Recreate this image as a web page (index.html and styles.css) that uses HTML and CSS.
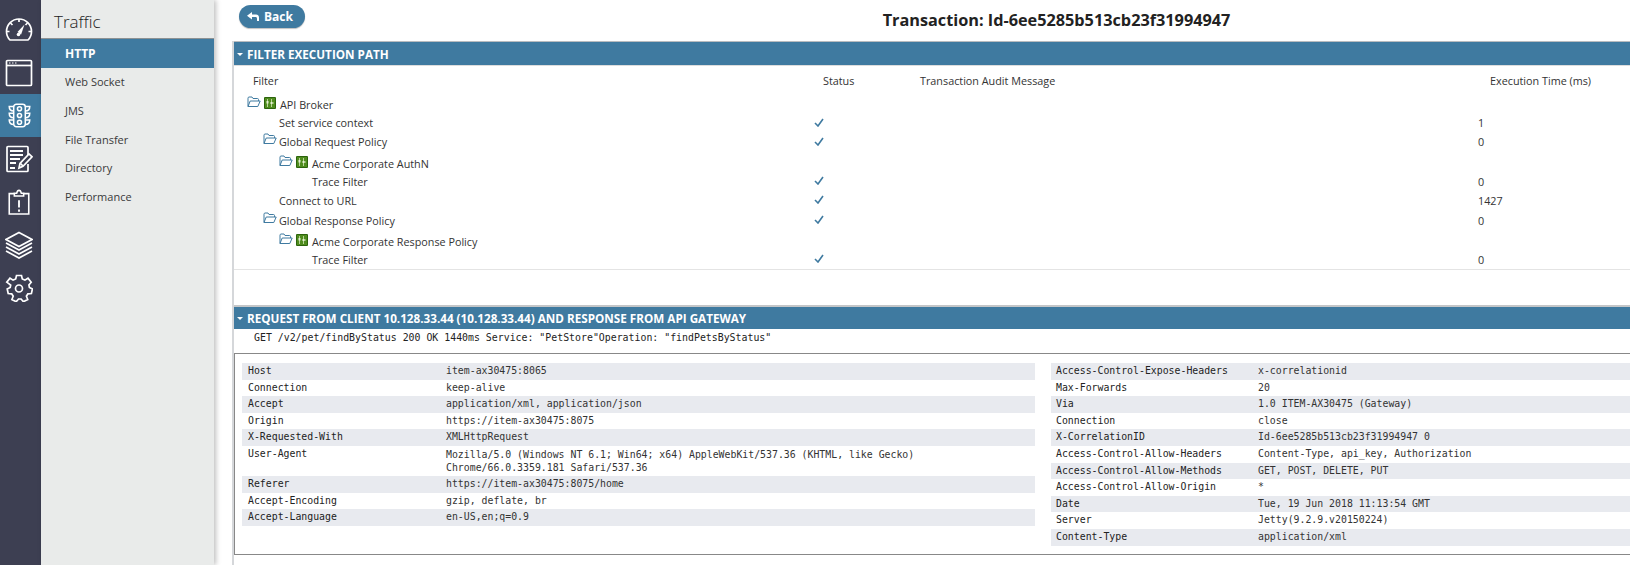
FILE: index.html
```html
<!DOCTYPE html>
<html lang="en">
<head>
    <meta charset="UTF-8">
    <meta name="viewport" content="width=device-width, initial-scale=1.0">
    <title>Transaction</title>
    <link rel="stylesheet" href="styles.css">
</head>
<body>

<svg class="defs" width="0" height="0">
    <symbol id="folder" viewBox="0 0 14 12">
        <path d="M1 10.500V2.200C1 1.500 1.400 1 2 1h3l1 1.500h4.500c.6 0 1 .4 1 1V5" fill="none" stroke="currentColor"/>
        <path d="M1 10.500L3.200 5h10l-2.400 5.500z" fill="none" stroke="currentColor"/>
    </symbol>
    <symbol id="policy" viewBox="0 0 12 12">
        <rect width="12" height="12" rx="1" fill="#2c640c"/>
        <rect x="1" y="1" width="10" height="10" fill="#4f8c1e"/>
        <path d="M3.500 2v8M7.500 2v8M7.500 6H10" stroke="#b9d49a" fill="none"/>
        <rect x="2.500" y="4" width="2" height="2.500" fill="#e4efd0"/>
        <rect x="6.500" y="5" width="2" height="2" fill="#e4efd0"/>
    </symbol>
    <symbol id="check" viewBox="0 0 10 9">
        <path d="M1 5l3 3 5-7" fill="none" stroke="currentColor" stroke-width="1.600"/>
    </symbol>
</svg>

<div class="app">
    <nav class="rail">
        <a class="rail-item">
            <svg viewBox="0 0 28 28" width="28" height="28"><path d="M5 24C2.800 21.800 1.500 18.700 1.500 15.500 1.500 8.600 7.100 3 14 3s12.500 5.600 12.500 12.500c0 3.200-1.300 6.300-3.500 8.500z"/><path d="M14 3v3M2 15.500h2.500M26 15.500h-2.500M5.500 7l2 2M22.500 7l-2 2"/><path class="solid" d="M19.500 8.500l-3.400 10-3.600-2.600z"/><circle class="solid" cx="13.500" cy="18.500" r="1.800"/></svg>
        </a>
        <a class="rail-item">
            <svg viewBox="0 0 28 28" width="28" height="28"><rect x="1.500" y="1.500" width="25" height="25" rx="1"/><path d="M1.500 6.500h25"/><path d="M4 4h1.500M7 4h1.500M10 4h1.500" class="thin"/></svg>
        </a>
        <a class="rail-item active">
            <svg viewBox="0 0 28 28" width="25" height="25"><rect x="7.500" y="1.500" width="13" height="25" rx="3"/><circle cx="14" cy="6.500" r="2.300"/><circle cx="14" cy="14" r="2.300"/><circle cx="14" cy="21.500" r="2.300"/><path d="M7.500 4H2.500c0 3 2 5 5 5M20.500 4h5c0 3-2 5-5 5M7.500 11.500h-5c0 3 2 5 5 5M20.500 11.500h5c0 3-2 5-5 5M7.500 19h-5c0 3 2 5 5 5M20.500 19h5c0 3-2 5-5 5"/></svg>
        </a>
        <a class="rail-item">
            <svg viewBox="0 0 28 28" width="28" height="28"><path d="M23 10V2.500c0-.6-.4-1-1-1H3c-.6 0-1 .4-1 1v23c0 .6.4 1 1 1h19c.6 0 1-.4 1-1V19"/><path class="bold" d="M5 6h13M5 10h13M5 14h10M5 18h6M5 23h5"/><path d="M14 23l1-4.500L24 9l3 2.800-9 9.500z"/><path d="M15.500 18.500l2.500 2.500"/></svg>
        </a>
        <a class="rail-item">
            <svg viewBox="0 0 28 28" width="26" height="26"><path d="M9 5H3.500v22h21V5H19"/><path d="M9 7.500V4.500h2.500c.5-2 1.500-3 2.500-3s2 1 2.500 3H19v3z"/><path class="bold" d="M14 12v8M14 22v2.500"/></svg>
        </a>
        <a class="rail-item">
            <svg viewBox="0 0 28 28" width="28" height="28"><path d="M14 1.500L27 8.500 14 15.500 1 8.500z"/><path d="M1 12l13 7 13-7M1 16l13 7 13-7M1 20l13 7 13-7"/></svg>
        </a>
        <a class="rail-item">
            <svg viewBox="0 0 28 28" width="28" height="28"><path d="M11.500 1.500h5l.8 3.500 2.600 1.100 3.100-1.900 3.200 4-2.300 2.800.5 2.500 3 1.500-1 4.500-3.500.4-1.500 2.300 1.300 3.300-4.300 2.200-2.300-2.700h-2.600l-2.300 2.700-4.300-2.200 1.300-3.300-1.500-2.300-3.500-.4-1-4.500 3-1.500.5-2.500L1.800 8.200l3.200-4 3.100 1.900 2.600-1.100z"/><circle cx="14" cy="14.500" r="3.500"/></svg>
        </a>
    </nav>

    <aside class="subnav">
        <h2>Traffic</h2>
        <a class="subnav-item active">HTTP</a>
        <a class="subnav-item">Web Socket</a>
        <a class="subnav-item">JMS</a>
        <a class="subnav-item">File Transfer</a>
        <a class="subnav-item">Directory</a>
        <a class="subnav-item">Performance</a>
    </aside>

    <main class="content">
        <div class="topbar">
            <button class="back">
                <svg viewBox="0 0 12 10" width="12" height="10"><path d="M5 0L0 3.700 5 7.500V5h3.500c1 0 1.500.6 1.500 2v2h2V5.500C12 3.500 10.800 2.500 9 2.500H5z" fill="#fff"/></svg>
                Back
            </button>
            <h1>Transaction: Id-6ee5285b513cb23f31994947</h1>
        </div>

        <section class="panel panel-filters">
            <header class="panel-head"><span class="caret"></span>Filter Execution Path</header>
            <div class="filter-cols">
                <span class="col-name">Filter</span>
                <span class="col-status">Status</span>
                <span class="col-audit">Transaction Audit Message</span>
                <span class="col-time">Execution Time (ms)</span>
            </div>
            <div class="filter-rows">
                <div class="frow"><div class="fname lvl0"><svg class="ico-folder"><use href="#folder"/></svg><svg class="ico-policy"><use href="#policy"/></svg>API Broker</div></div>
                <div class="frow tall"><div class="fname lvl1b">Set service context</div><svg class="ico-check"><use href="#check"/></svg><div class="ftime">1</div></div>
                <div class="frow tall"><div class="fname lvl1"><svg class="ico-folder"><use href="#folder"/></svg>Global Request Policy</div><svg class="ico-check"><use href="#check"/></svg><div class="ftime">0</div></div>
                <div class="frow acme"><div class="fname lvl2"><svg class="ico-folder"><use href="#folder"/></svg><svg class="ico-policy"><use href="#policy"/></svg>Acme Corporate AuthN</div></div>
                <div class="frow"><div class="fname lvl2b">Trace Filter</div><svg class="ico-check"><use href="#check"/></svg><div class="ftime">0</div></div>
                <div class="frow connect"><div class="fname lvl1b">Connect to URL</div><svg class="ico-check"><use href="#check"/></svg><div class="ftime">1427</div></div>
                <div class="frow lowered"><div class="fname lvl1"><svg class="ico-folder"><use href="#folder"/></svg>Global Response Policy</div><svg class="ico-check"><use href="#check"/></svg><div class="ftime">0</div></div>
                <div class="frow acme"><div class="fname lvl2"><svg class="ico-folder"><use href="#folder"/></svg><svg class="ico-policy"><use href="#policy"/></svg>Acme Corporate Response Policy</div></div>
                <div class="frow"><div class="fname lvl2b">Trace Filter</div><svg class="ico-check"><use href="#check"/></svg><div class="ftime">0</div></div>
            </div>
        </section>

        <section class="panel panel-request">
            <header class="panel-head"><span class="caret"></span>Request from client 10.128.33.44 (10.128.33.44) and response from API Gateway</header>
            <div class="request-line">GET /v2/pet/findByStatus 200 OK 1440ms Service: "PetStore"Operation: "findPetsByStatus"</div>
            <div class="headers-box">
                <dl class="headers headers-req">
                    <div><dt>Host</dt><dd>item-ax30475:8065</dd></div>
                    <div><dt>Connection</dt><dd>keep-alive</dd></div>
                    <div><dt>Accept</dt><dd>application/xml, application/json</dd></div>
                    <div><dt>Origin</dt><dd>https://item-ax30475:8075</dd></div>
                    <div><dt>X-Requested-With</dt><dd>XMLHttpRequest</dd></div>
                    <div class="multi"><dt>User-Agent</dt><dd>Mozilla/5.0 (Windows NT 6.1; Win64; x64) AppleWebKit/537.36 (KHTML, like Gecko)<br>Chrome/66.0.3359.181 Safari/537.36</dd></div>
                    <div><dt>Referer</dt><dd>https://item-ax30475:8075/home</dd></div>
                    <div><dt>Accept-Encoding</dt><dd>gzip, deflate, br</dd></div>
                    <div><dt>Accept-Language</dt><dd>en-US,en;q=0.9</dd></div>
                </dl>
                <dl class="headers headers-res">
                    <div><dt>Access-Control-Expose-Headers</dt><dd>x-correlationid</dd></div>
                    <div><dt>Max-Forwards</dt><dd>20</dd></div>
                    <div><dt>Via</dt><dd>1.0 ITEM-AX30475 (Gateway)</dd></div>
                    <div><dt>Connection</dt><dd>close</dd></div>
                    <div><dt>X-CorrelationID</dt><dd>Id-6ee5285b513cb23f31994947 0</dd></div>
                    <div><dt>Access-Control-Allow-Headers</dt><dd>Content-Type, api_key, Authorization</dd></div>
                    <div><dt>Access-Control-Allow-Methods</dt><dd>GET, POST, DELETE, PUT</dd></div>
                    <div><dt>Access-Control-Allow-Origin</dt><dd>*</dd></div>
                    <div><dt>Date</dt><dd>Tue, 19 Jun 2018 11:13:54 GMT</dd></div>
                    <div><dt>Server</dt><dd>Jetty(9.2.9.v20150224)</dd></div>
                    <div><dt>Content-Type</dt><dd>application/xml</dd></div>
                </dl>
            </div>
        </section>
    </main>
</div>

</body>
</html>
```

FILE: styles.css
```css
/* General */
* {
    margin: 0;
    padding: 0;
    box-sizing: border-box;
}

html, body {
    height: 100%;
    overflow: hidden;
    font-family: 'Open Sans', sans-serif;
    color: #333;
    background: #fff;
}

.defs {
    position: absolute;
}

.app {
    display: flex;
    height: 565px;
}

/* Icon rail */
.rail {
    width: 41px;
    flex-shrink: 0;
    background: #3d3f52;
    padding-top: 8px;
}

.rail-item {
    display: flex;
    justify-content: center;
    align-items: center;
    height: 43px;
    padding-right: 3px;
}

.rail-item.active {
    background: #3f7aa0;
}

.rail-item svg {
    fill: none;
    stroke: #fff;
    stroke-width: 1.700;
}

.rail-item svg .solid {
    fill: #fff;
    stroke: none;
}

.rail-item svg .thin {
    stroke-width: 1;
}

.rail-item svg .bold {
    stroke-width: 2;
}

/* Second column */
.subnav {
    width: 173px;
    flex-shrink: 0;
    background: #e9ebea;
    box-shadow: 2px 0 5px rgba(0, 0, 0, 0.25);
    z-index: 1;
}

.subnav h2 {
    height: 39px;
    padding: 12px 0 0 13px;
    font-size: 17px;
    line-height: 20px;
    font-weight: 300;
    color: #222;
    border-bottom: 1px solid #8d9294;
}

.subnav-item {
    display: block;
    height: 28.800px;
    padding-left: 24px;
    font-size: 11px;
    line-height: 28.800px;
    color: #3a3a3a;
}

.subnav-item.active {
    height: 29px;
    background: #3f7aa0;
    color: #fff;
    font-size: 12px;
    line-height: 29px;
    font-weight: 700;
}

/* Main */
.content {
    flex: 1;
    min-width: 0;
    padding-left: 18px;
    display: flex;
    flex-direction: column;
}

.topbar {
    display: flex;
    height: 41px;
    padding: 5px 0 0 7px;
}

.back {
    display: flex;
    align-items: center;
    gap: 5px;
    flex-shrink: 0;
    width: 66px;
    height: 23px;
    padding-left: 8px;
    border: none;
    border-radius: 12px;
    background: #3f7aa0;
    color: #fff;
    font-family: inherit;
    font-size: 12px;
    font-weight: 700;
    box-shadow: 0 1px 1px rgba(0, 0, 0, 0.25);
}

.topbar h1 {
    flex: 1;
    padding: 4px 0 0 178px;
    text-align: center;
    font-size: 16.250px;
    line-height: 22px;
    font-weight: 700;
    color: #222;
}

.panel {
    border-left: 2px solid #d5d7da;
}

.panel-head {
    display: flex;
    align-items: center;
    height: 24px;
    padding-left: 1px;
    border-top: 1px solid #b9bcbf;
    background: #3f7aa0;
    color: #fff;
    font-size: 11.700px;
    font-weight: 700;
    text-transform: uppercase;
}

.caret {
    width: 0;
    height: 0;
    margin: 1px 4px 0 2px;
    border-left: 3px solid transparent;
    border-right: 3px solid transparent;
    border-top: 3px solid #fff;
}

/* Filter table */
.panel-filters {
    height: 264px;
    flex-shrink: 0;
}

.filter-cols {
    display: flex;
    height: 30px;
    padding-top: 6px;
    border-top: 1px solid #ddd;
    font-size: 10.800px;
    line-height: 18px;
}

.col-name {
    width: 589px;
    padding-left: 19px;
}

.col-status {
    width: 97px;
}

.col-audit {
    width: 570px;
}

.filter-rows {
    padding-bottom: 1px;
    border-bottom: 1px solid #e4e4e4;
    font-size: 10.800px;
}

.frow {
    display: flex;
    align-items: center;
    height: 18px;
}

.frow.tall {
    height: 19px;
}

.frow.connect {
    height: 19px;
    padding-top: 1px;
}

.frow.lowered {
    height: 20px;
    padding-top: 2px;
}

.frow.acme {
    height: 21px;
    padding-top: 3px;
}

.fname {
    display: flex;
    align-items: center;
    width: 580px;
}

.lvl0 { padding-left: 13px; }
.lvl1 { padding-left: 29px; }
.lvl1b { padding-left: 45px; }
.lvl2 { padding-left: 45px; }
.lvl2b { padding-left: 78px; }

.ico-folder {
    width: 14px;
    height: 12px;
    margin: -5px 2px 0 0;
    color: #3f7aa0;
    flex-shrink: 0;
}

.ico-policy {
    width: 12px;
    height: 12px;
    margin: -3px 4px 0 1px;
    flex-shrink: 0;
}

.ico-check {
    width: 10px;
    height: 9px;
    margin-top: -1px;
    color: #3f7aa0;
}

.ftime {
    margin-left: 654px;
}

/* Request section */
.panel-request {
    flex: 1;
}

.panel-request .panel-head {
    border-top: 2px solid #c4c6c8;
}

.request-line {
    height: 24px;
    padding: 2px 0 0 20px;
    font-family: 'DejaVu Sans Mono', monospace;
    font-size: 9.900px;
    line-height: 14px;
    color: #222;
}

.headers-box {
    display: flex;
    height: 202px;
    padding-top: 9px;
    border: 1px solid #888;
    border-right: none;
}

.headers {
    font-family: 'DejaVu Sans Mono', monospace;
    font-size: 9.850px;
    line-height: 16.600px;
    color: #222;
}

.headers-req {
    width: 793px;
    margin: 0 16px 0 7px;
}

.headers-res {
    flex: 1;
}

.headers div {
    display: flex;
    padding-left: 5px;
}

.headers-req div {
    padding-left: 6px;
}

.headers div:nth-child(odd) {
    background: #e8eaef;
}

.headers-req dt {
    width: 198px;
}

.headers-res dt {
    width: 202px;
}

.headers dd {
    color: #333;
}

.headers .multi dd {
    padding: 2px 0 1px;
    line-height: 13.500px;
}
```
